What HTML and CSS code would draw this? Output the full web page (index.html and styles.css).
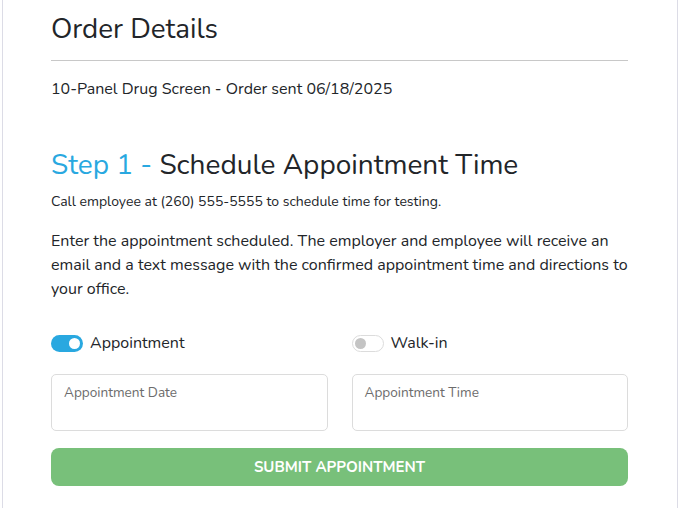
FILE: index.html
```html
<!DOCTYPE html>
<html>
<head>
<meta charset="utf-8">
<link rel="stylesheet" href="styles.css">
</head>
<body>
<div class="card">
  <h1 class="title">Order Details</h1>
  <hr class="rule">
  <p class="order">10-Panel Drug Screen - Order sent 06/18/2025</p>
  <h2 class="step"><span class="step-num">Step 1 -</span> Schedule Appointment Time</h2>
  <p class="call">Call employee at (260) 555-5555 to schedule time for testing.</p>
  <p class="desc">Enter the appointment scheduled. The employer and employee will receive an email and a text message with the confirmed appointment time and directions to your office.</p>
  <div class="grid">
    <label class="opt"><span class="toggle on"><span class="knob"></span></span>Appointment</label>
    <label class="opt"><span class="toggle off"><span class="knob"></span></span>Walk-in</label>
    <div class="field"><span class="ph">Appointment Date</span></div>
    <div class="field"><span class="ph">Appointment Time</span></div>
  </div>
  <button class="submit">SUBMIT APPOINTMENT</button>
</div>
</body>
</html>
```
FILE: styles.css
```css
html, body { margin: 0; padding: 0; background: #fff; }
body { font-family: "Nunito", "Lato", "Open Sans", sans-serif; color: #222529; }
.card {
  margin: 0 3px 0 2px;
  border-left: 1px solid #dcdce6;
  border-right: 1px solid #dcdce6;
  padding: 11px 49px 30px 48px;
  min-height: 470px;
}
.title { font-size: 27.8px; font-weight: 400; margin: 0; line-height: 36px; }
.rule { border: 0; border-top: 1px solid #c8c8c8; margin: 13px 0 0; }
.order { font-size: 16px; margin: 17px 0 0; line-height: 22px; }
.step { font-size: 28px; font-weight: 400; margin: 47px 0 0; line-height: 36px; }
.step-num { color: #29a8e0; }
.call { font-size: 14px; margin: 10px 0 0; line-height: 18px; }
.desc { font-size: 16px; margin: 18px 0 0; line-height: 24px; }
.grid {
  display: grid;
  grid-template-columns: 1fr 1fr;
  column-gap: 24px;
  row-gap: 20px;
  margin-top: 31px;
}
.opt { display: flex; align-items: center; gap: 7px; font-size: 16px; line-height: 22px; }
.toggle {
  width: 32px; height: 17px; border-radius: 9px; box-sizing: border-box;
  display: flex; align-items: center; padding: 0 3px;
}
.toggle.on { background: #29a8e0; justify-content: flex-end; }
.toggle.off { border: 1px solid #dcdcdc; background: #fff; justify-content: flex-start; padding: 0 2px; }
.knob { width: 11px; height: 11px; border-radius: 50%; }
.on .knob { background: #fff; }
.off .knob { background: #c4c4c4; }
.field {
  height: 57px; box-sizing: border-box;
  border: 1px solid #dcdcdc; border-radius: 5px;
  padding: 6px 12px;
}
.ph { font-size: 13.6px; color: #6c6c6c; line-height: 18px; }
.submit {
  display: block; width: 100%; margin-top: 17px;
  height: 38px; border: 0; border-radius: 8px;
  background: #78c07a; color: #fff;
  font-family: inherit; font-weight: 700; font-size: 15px;
}
```
